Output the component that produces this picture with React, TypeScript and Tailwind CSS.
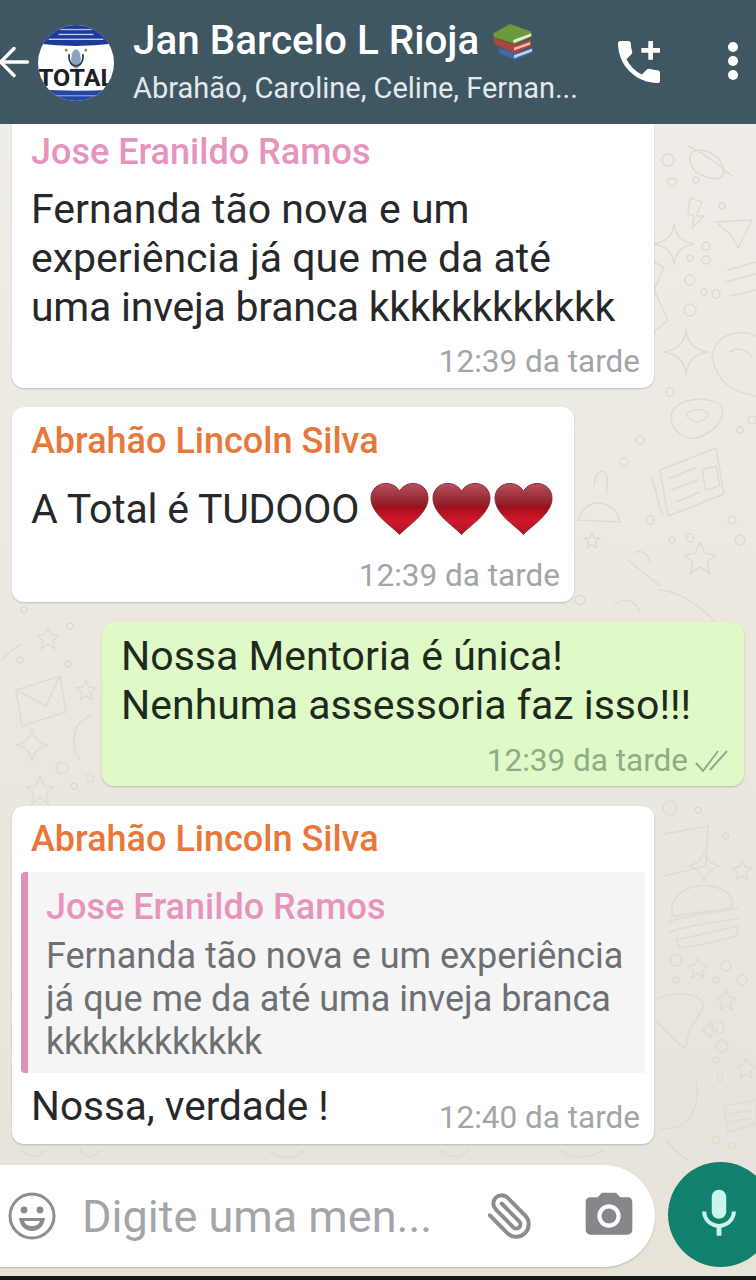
import { ArrowLeft, Paperclip } from 'lucide-react';
import { MdAddIcCall, MdMic, MdPhotoCamera } from 'react-icons/md';

const font = { fontFamily: 'Roboto, sans-serif' };

function star(x: number, y: number, s: number) {
  return `M${x} ${y - s}L${x + s * 0.3} ${y - s * 0.3}L${x + s} ${y - s * 0.2}L${x + s * 0.45} ${y + s * 0.25}L${x + s * 0.6} ${y + s}L${x} ${y + s * 0.55}L${x - s * 0.6} ${y + s}L${x - s * 0.45} ${y + s * 0.25}L${x - s} ${y - s * 0.2}L${x - s * 0.3} ${y - s * 0.3}Z`;
}

function spark(x: number, y: number, s: number) {
  return `M${x} ${y - s}Q${x + 2} ${y - 3} ${x + s} ${y}Q${x + 2} ${y + 3} ${x} ${y + s}Q${x - 2} ${y + 3} ${x - s} ${y}Q${x - 2} ${y - 3} ${x} ${y - s}Z`;
}

// faint wallpaper doodles
const doodlePaths = [
  // saturn
  'M692 152 C706 146 722 156 724 172 C722 184 706 178 696 172 C690 166 688 158 692 152Z',
  'M688 146 C704 152 722 168 732 176',
  // bolt, plane
  'M690 198 L702 202 L696 216 L704 216 L692 228 L694 216 L688 214Z',
  'M716 222 L752 220 L738 248 L732 236Z',
  'M654 262 L664 268 L654 290 L668 320 L654 332',
  // satellite / notes right
  'M728 270 L756 262 M726 282 L756 274 M730 296 L756 290',
  // astronaut
  'M712 356 C716 334 740 328 756 336 M712 356 C716 380 730 392 756 396 M730 352 C738 346 748 350 752 358',
  // donut
  'M672 412 C680 398 704 396 720 404 C728 412 718 432 696 438 C680 440 668 426 672 412Z',
  'M686 414 C692 408 704 408 708 414 C706 422 692 426 686 414Z',
  // newspaper
  'M660 470 L716 448 L724 494 L668 516Z',
  'M670 478 L696 468 M672 490 L698 480 M676 502 L700 492',
  'M702 470 L716 466 L720 486 L706 490Z',
  'M652 478 L662 514',
  // person, trophy shapes
  'M594 486 C596 464 612 466 606 494 M578 520 C586 494 616 500 620 522 Z',
  // rocket
  'M628 560 L660 586 M636 552 C644 550 650 556 650 564 M660 590 C680 592 700 606 716 622',
  // envelope
  'M16 690 L60 676 L66 712 L22 726Z',
  'M16 690 L46 706 L60 676',
  'M2 660 C10 650 18 646 22 644',
  'M80 760 C70 746 72 720 92 716',
  // burger
  'M672 906 C678 880 724 880 732 900 L732 908 L672 916Z',
  'M668 922 C690 914 720 912 738 908 M670 932 C692 924 720 922 740 918',
  'M676 940 L738 926 L736 936 C716 942 696 946 680 948Z',
  'M664 834 L708 826 L706 866 L664 876',
  // bag + cloud
  'M654 1000 C672 992 696 990 704 1004 C700 1020 688 1022 686 1048 C670 1042 666 1024 654 1022',
  'M724 1106 L756 1100 L756 1124 L728 1132Z',
  'M730 1114 L752 1110 M730 1122 L752 1118',
  'M696 1080 C700 1100 694 1118 680 1126 L660 1130',
  'M666 1140 C674 1150 680 1156 688 1160',
  // lower band
  'M20 1150 C28 1156 36 1160 46 1150 M80 1148 C84 1158 92 1160 100 1150 M270 1152 C282 1160 296 1160 304 1150',
  'M440 1150 C450 1160 462 1158 470 1148 M560 1150 C572 1160 590 1158 604 1150',
  'M614 606 C624 596 636 600 640 612',
];

const doodleStars: [number, number, number][] = [
  [48, 638, 11], [86, 690, 10], [40, 790, 14], [700, 558, 16], [592, 540, 8],
  [698, 968, 10], [726, 1000, 10], [746, 1068, 10], [742, 870, 10],
];

const doodleSparks: [number, number, number][] = [
  [674, 244, 20], [686, 352, 22], [32, 745, 16], [704, 866, 16], [710, 1030, 8],
];

const dots: [number, number, number][] = [
  [668, 160, 6], [672, 182, 4], [696, 180, 3], [706, 246, 4], [706, 260, 4], [690, 258, 3], [722, 206, 3],
  [690, 280, 5], [704, 292, 3], [690, 310, 6], [716, 294, 4], [670, 392, 4], [640, 440, 4], [624, 462, 4], [650, 520, 4],
  [672, 540, 3], [690, 538, 4], [732, 520, 4], [740, 540, 5], [580, 600, 5], [24, 610, 3], [70, 626, 3], [68, 664, 3],
  [62, 768, 6], [90, 778, 4], [74, 786, 3], [670, 808, 7], [698, 810, 3], [726, 836, 3], [676, 960, 6], [676, 980, 3],
  [726, 966, 5], [716, 980, 3], [718, 1028, 6], [722, 1046, 6], [716, 1060, 3], [720, 1078, 3], [716, 1140, 4], [732, 1146, 3],
  [20, 660, 3], [752, 420, 4], [740, 430, 3], [742, 980, 5],
];

function Wallpaper() {
  return (
    <svg className="absolute inset-0" width="756" height="1280" fill="none" stroke="#e0dbd0" strokeWidth="1.6" strokeLinejoin="round" strokeLinecap="round">
      {doodlePaths.map((d, i) => <path key={i} d={d} />)}
      {doodleStars.map(([x, y, s], i) => <path key={i} d={star(x, y, s)} />)}
      {doodleSparks.map(([x, y, s], i) => <path key={i} d={spark(x, y, s)} />)}
      {dots.map(([x, y, r], i) => <circle key={i} cx={x} cy={y} r={r} />)}
    </svg>
  );
}

function Logo() {
  return (
    <svg width="78" height="78" viewBox="0 0 80 80" className="shrink-0">
      <defs>
        <clipPath id="logoClip"><circle cx="40" cy="40" r="39" /></clipPath>
      </defs>
      <g clipPath="url(#logoClip)">
        <rect width="80" height="80" fill="#ffffff" />
        <path d="M0 0 H80 V20 Q40 25 0 20Z" fill="#1c3a9a" />
        <path d="M0 67 Q40 70 80 67 V80 H0Z" fill="#2747a8" />
        <rect x="14" y="73" width="52" height="1.2" fill="#8fa2da" />
        <rect x="24" y="5" width="32" height="1.4" fill="#aebce2" />
        <rect x="22" y="10" width="36" height="1.4" fill="#c4cee9" />
        <rect x="12" y="15" width="56" height="1.4" fill="#c4cee9" />
        <ellipse cx="40" cy="36" rx="5" ry="10" fill="#8ba3bf" />
        <path d="M33 31 C32 39 36 43 40 43 C44 43 48 39 47 31" fill="none" stroke="#2f3d46" strokeWidth="1.8" />
        <circle cx="30" cy="27" r="1.5" fill="#8a9a55" />
        <circle cx="50" cy="27" r="1.5" fill="#8a9a55" />
        <text x="40" y="64" textAnchor="middle" fontFamily="Roboto, sans-serif" fontWeight="700" fontSize="25" fill="#1c2024" textLength="78" lengthAdjust="spacingAndGlyphs">TOTAL</text>
      </g>
    </svg>
  );
}

function Books() {
  return (
    <svg width="44" height="38" viewBox="0 0 46 40" className="shrink-0">
      <path d="M8 26 L26 32 L44 26 L44 31 L25 39 L9 32Z" fill="#3f6aa8" />
      <path d="M24 34 L43 27 L43 30 L24 37Z" fill="#c9cfe6" />
      <path d="M2 15 L25 23 L42 17 L42 24 L25 32 L3 22Z" fill="#a8483c" />
      <path d="M24 26 L41 20 L41 23 L24 29Z" fill="#f0b8ac" />
      <path d="M2 11 L20 1 L42 9 L43 14 L25 22 L3 15Z" fill="#6c9a3a" />
      <path d="M23 18 L42 11 L42 14 L24 21Z" fill="#e6ecd0" />
    </svg>
  );
}

function Heart() {
  return (
    <svg width="59" height="54" viewBox="0 0 60 54" className="shrink-0">
      <defs>
        <linearGradient id="heartFill" x1="0" y1="0" x2="0" y2="1">
          <stop offset="0" stopColor="#b8505c" />
          <stop offset="0.4" stopColor="#90202c" />
          <stop offset="0.46" stopColor="#a00e1a" />
          <stop offset="0.72" stopColor="#d2182a" />
          <stop offset="1" stopColor="#a81622" />
        </linearGradient>
      </defs>
      <path
        d="M30 53 C22 44 1 32 1 16 C1 6 9 1 16 1 C23 1 28 5 30 9 C32 5 37 1 44 1 C51 1 59 6 59 16 C59 32 38 44 30 53Z"
        fill="url(#heartFill)"
        stroke="#8a2a34"
        strokeWidth="1"
      />
    </svg>
  );
}

function Smile() {
  return (
    <svg width="50" height="50" viewBox="0 0 50 50" fill="none" className="shrink-0">
      <circle cx="25" cy="25" r="22" stroke="#8b8d90" strokeWidth="3" />
      <circle cx="17" cy="19" r="3.4" fill="#8b8d90" />
      <circle cx="33" cy="19" r="3.4" fill="#8b8d90" />
      <path d="M12 27 H38 C37 35 32 40 25 40 C18 40 13 35 12 27Z" fill="#8b8d90" />
      <path d="M17 30 H33 C32 33 29 35 25 35 C21 35 18 33 17 30Z" fill="#ffffff" />
    </svg>
  );
}

function Time({ text, className = 'text-[#a2a6a8]' }: { text: string; className?: string }) {
  return <span className={`text-[31.5px] leading-none whitespace-nowrap ${className}`}>{text}</span>;
}

export default function App() {
  return (
    <div className="relative w-[756px] h-[1280px] overflow-hidden flex flex-col bg-gradient-to-b from-[#f0eee9] via-[#ece8e1] to-[#e8e3d9]" style={font}>
      <Wallpaper />

      <header className="relative z-10 h-[124px] shrink-0 bg-[#3f5663] flex items-center">
        <ArrowLeft size={46} strokeWidth={1.8} className="text-white -ml-[9px] shrink-0" />
        <div className="mt-[1px] shrink-0"><Logo /></div>
        <div className="ml-[18px] flex-1 min-w-0 -mt-[5px]">
          <div className="flex items-center gap-[12px] h-[50px]">
            <span className="text-[40.4px] font-medium text-white leading-none">Jan Barcelo L Rioja</span>
            <Books />
          </div>
          <div className="text-[29px] leading-none text-[#e3e9ec] mt-[7px] whitespace-nowrap">Abrahão, Caroline, Celine, Fernan...</div>
        </div>
        <MdAddIcCall size={56} className="text-white shrink-0 mr-[61px]" />
        <div className="flex flex-col gap-[4px] mr-[18px] shrink-0 -mt-[3px]">
          <span className="w-[10px] h-[10px] rounded-full bg-white" />
          <span className="w-[10px] h-[10px] rounded-full bg-white" />
          <span className="w-[10px] h-[10px] rounded-full bg-white" />
        </div>
      </header>

      <main className="relative z-0 flex-1 flex flex-col">
        <section className="ml-[12px] w-[642px] h-[264px] bg-white rounded-b-[12px] shadow-[0_1px_2px_rgba(0,0,0,0.2)] pl-[19px] pr-[14px]">
          <div className="text-[36px] font-medium text-[#e595bd] leading-none pt-[10px]">Jose Eranildo Ramos</div>
          <div className="text-[41px] leading-[49px] text-[#26282a] mt-[15px] whitespace-nowrap">
            Fernanda tão nova e um<br />experiência já que me da até<br />
            <span className="tracking-[-0.25px]">uma inveja branca kkkkkkkkkkkk</span>
          </div>
          <div className="text-right mt-[14px]"><Time text="12:39 da tarde" /></div>
        </section>

        <section className="mt-[19px] ml-[12px] w-[562px] h-[195px] bg-white rounded-[12px] shadow-[0_1px_2px_rgba(0,0,0,0.2)] pl-[19px] pr-[14px]">
          <div className="text-[36px] font-medium text-[#e8773a] leading-none pt-[16px]">Abrahão Lincoln Silva</div>
          <div className="flex items-center mt-[23px] h-[54px]">
            <span className="text-[41px] leading-none text-[#26282a] tracking-[-0.2px] mr-[11px]">A Total é TUDOOO</span>
            <Heart /><span className="w-[3px]" /><Heart /><span className="w-[3px]" /><Heart />
          </div>
          <div className="text-right mt-[24px]"><Time text="12:39 da tarde" /></div>
        </section>

        <section className="mt-[20px] ml-[102px] w-[642px] h-[164px] bg-[#dffac6] rounded-[12px] shadow-[0_1px_2px_rgba(0,0,0,0.2)] pl-[19px] pr-[14px]">
          <div className="text-[41px] leading-[49px] text-[#1f2a1e] pt-[10px]">
            Nossa Mentoria é única!<br />Nenhuma assessoria faz isso!!!
          </div>
          <div className="flex justify-end items-center mt-[15px] gap-[6px]">
            <Time text="12:39 da tarde" className="text-[#90ab88]" />
            <svg width="36" height="26" viewBox="0 0 36 26" fill="none" stroke="#90ab88" strokeWidth="2">
              <path d="M2 15 L9 23 L24 3" />
              <path d="M16 22 L33 3" />
            </svg>
          </div>
        </section>

        <section className="mt-[20px] ml-[12px] w-[642px] h-[338px] bg-white rounded-[12px] shadow-[0_1px_2px_rgba(0,0,0,0.2)] px-[9px]">
          <div className="text-[36px] font-medium text-[#e8773a] leading-none pt-[15px] pl-[10px]">Abrahão Lincoln Silva</div>
          <div className="mt-[15px] h-[201px] bg-[#f5f5f5] border-l-[7px] border-[#df8fb8] rounded-l-[4px] pl-[18px]">
            <div className="text-[36px] font-medium text-[#e595bd] leading-none pt-[17px]">Jose Eranildo Ramos</div>
            <div className="text-[36px] leading-[43px] text-[#6d7073] mt-[10px]">
              Fernanda tão nova e um experiência<br />já que me da até uma inveja branca<br />
              <span className="tracking-[-0.25px]">kkkkkkkkkkkk</span>
            </div>
          </div>
          <div className="flex justify-between items-start pl-[10px] pr-[5px] mt-[13px]">
            <span className="text-[40.5px] leading-none text-[#26282a]">Nossa, verdade !</span>
            <span className="mt-[16px]"><Time text="12:40 da tarde" /></span>
          </div>
        </section>

        <footer className="mt-[21px] flex items-center">
          <div className="w-[655px] h-[102px] shrink-0 bg-white rounded-r-[51px] shadow-[0_1px_2px_rgba(0,0,0,0.2)] flex items-center pl-[7px]">
            <Smile />
            <span className="ml-[25px] text-[45px] leading-none text-[#a3a5a8] flex-1 whitespace-nowrap">Digite uma men...</span>
            <Paperclip size={50} strokeWidth={1.9} className="text-[#8b8d90] -scale-x-100 shrink-0" />
            <MdPhotoCamera size={56} className="text-[#85878b] ml-[46px] mr-[18px] shrink-0" />
          </div>
          <div className="ml-[13px] w-[105px] h-[105px] rounded-full bg-[#12806f] flex items-center justify-center shrink-0 -mt-[4px] pr-[4px]">
            <MdMic size={58} className="text-[#c9f5ea]" />
          </div>
        </footer>
      </main>

      <div className="absolute left-0 right-0 bottom-0 h-[4px] bg-[#17181a] z-20" />
    </div>
  );
}
